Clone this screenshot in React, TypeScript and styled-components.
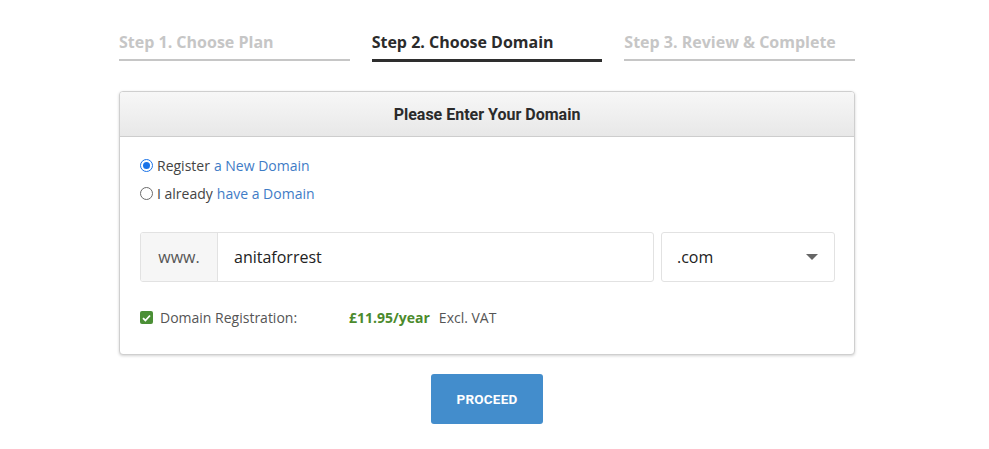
import React from "react";
import styled, { createGlobalStyle } from "styled-components";

const Global = createGlobalStyle`
  html, body { margin: 0; padding: 0; background: #fff; }
  body { font-family: "Open Sans", "Liberation Sans", sans-serif; color: #333; }
  * { box-sizing: border-box; }
`;

const Page = styled.div`
  width: 989px;
  height: 449px;
  padding: 30px 0 0 119px;
`;

const Container = styled.div`
  width: 736px;
  display: flex;
  flex-direction: column;
`;

const Steps = styled.div`
  display: grid;
  grid-template-columns: repeat(3, 1fr);
  column-gap: 22px;
`;

const Step = styled.div<{ $active?: boolean }>`
  font-family: "Open Sans", sans-serif;
  font-weight: 700;
  font-size: 16px;
  line-height: 24px;
  color: ${(p) => (p.$active ? "#2b2b2b" : "#c6c6c6")};
  padding-bottom: 5px;
  border-bottom: ${(p) => (p.$active ? "3px solid #2e2e2e" : "2px solid #c6c6c6")};
  height: ${(p) => (p.$active ? "32px" : "31px")};
`;

const Card = styled.div`
  margin-top: 29px;
  border: 1px solid #cfcfcf;
  border-radius: 4px;
  box-shadow: 0 1px 3px rgba(0, 0, 0, 0.18);
  background: #fff;
  overflow: hidden;
`;

const CardHeader = styled.div`
  height: 45px;
  background: linear-gradient(#f7f7f7, #e8e8e8);
  border-bottom: 1px solid #cdcdcd;
  display: flex;
  align-items: center;
  justify-content: center;
  font-family: Roboto, sans-serif;
  font-weight: 700;
  font-size: 16px;
  color: #2b2b2b;
`;

const CardBody = styled.div`
  padding: 14px 19px 27px 20px;
  display: flex;
  flex-direction: column;
`;

const RadioRow = styled.label`
  display: flex;
  align-items: center;
  height: 28px;
  font-size: 14px;
  color: #444;
`;

const RadioDot = styled.span<{ $checked?: boolean }>`
  width: 13px;
  height: 13px;
  border-radius: 50%;
  margin-right: 4px;
  flex: none;
  border: ${(p) => (p.$checked ? "1px solid #1a73e8" : "1px solid #6b6b6b")};
  background: #fff;
  display: flex;
  align-items: center;
  justify-content: center;
  &::after {
    content: "";
    width: 7px;
    height: 7px;
    border-radius: 50%;
    background: ${(p) => (p.$checked ? "#1a73e8" : "transparent")};
  }
`;

const Link = styled.span`
  color: #3f7cc6;
  margin-left: 4px;
`;

const InputGroup = styled.div`
  margin-top: 25px;
  display: flex;
  gap: 7px;
  height: 50px;
`;

const DomainBox = styled.div`
  flex: 1;
  display: flex;
  border: 1px solid #e2e2e2;
  border-radius: 3px;
  overflow: hidden;
`;

const Addon = styled.div`
  width: 77px;
  background: #f6f6f6;
  border-right: 1px solid #e2e2e2;
  display: flex;
  align-items: center;
  justify-content: center;
  font-size: 16px;
  color: #555;
`;

const TextField = styled.div`
  flex: 1;
  display: flex;
  align-items: center;
  padding-left: 16px;
  font-size: 16px;
  color: #222;
`;

const Select = styled.div`
  width: 174px;
  border: 1px solid #e2e2e2;
  border-radius: 3px;
  display: flex;
  align-items: center;
  justify-content: space-between;
  padding: 0 16px 0 15px;
  font-size: 16px;
  color: #222;
`;

const Caret = styled.span`
  width: 0;
  height: 0;
  border-left: 6px solid transparent;
  border-right: 6px solid transparent;
  border-top: 6px solid #666;
`;

const PriceRow = styled.div`
  margin-top: 26px;
  display: flex;
  align-items: center;
  font-size: 14px;
  color: #555;
`;

const Check = styled.span`
  width: 13px;
  height: 13px;
  border-radius: 2px;
  background: #4b8f36;
  display: flex;
  align-items: center;
  justify-content: center;
  margin-right: 7px;
`;

const Label = styled.span`
  width: 189px;
`;

const Price = styled.span`
  color: #4b8a2c;
  font-weight: 700;
  margin-right: 9px;
`;

const Button = styled.button`
  align-self: center;
  margin-top: 19px;
  width: 112px;
  height: 50px;
  border: none;
  border-radius: 3px;
  background: #438dcc;
  color: #fff;
  font-family: Roboto, sans-serif;
  font-weight: 700;
  font-size: 13.5px;
  letter-spacing: 0.2px;
`;

export default function App() {
  return (
    <>
      <Global />
      <Page>
        <Container>
          <Steps>
            <Step>Step 1. Choose Plan</Step>
            <Step $active>Step 2. Choose Domain</Step>
            <Step>Step 3. Review &amp; Complete</Step>
          </Steps>
          <Card>
            <CardHeader>Please Enter Your Domain</CardHeader>
            <CardBody>
              <RadioRow>
                <RadioDot $checked />
                Register<Link>a New Domain</Link>
              </RadioRow>
              <RadioRow>
                <RadioDot />
                I already<Link>have a Domain</Link>
              </RadioRow>
              <InputGroup>
                <DomainBox>
                  <Addon>www.</Addon>
                  <TextField>anitaforrest</TextField>
                </DomainBox>
                <Select>
                  .com
                  <Caret />
                </Select>
              </InputGroup>
              <PriceRow>
                <Check>
                  <svg width="9" height="8" viewBox="0 0 9 8">
                    <path d="M1 4.2 L3.4 6.5 L8 1.5" stroke="#fff" strokeWidth="1.8" fill="none" />
                  </svg>
                </Check>
                <Label>Domain Registration:</Label>
                <Price>£11.95/year</Price>
                Excl. VAT
              </PriceRow>
            </CardBody>
          </Card>
          <Button>PROCEED</Button>
        </Container>
      </Page>
    </>
  );
}
